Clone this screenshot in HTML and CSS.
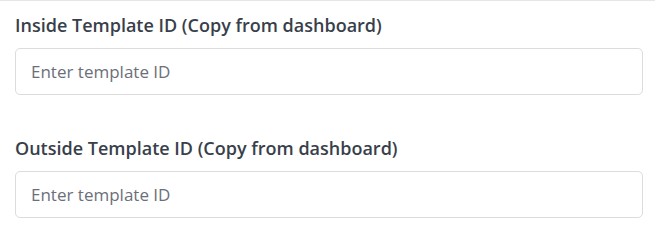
FILE: index.html
```html
<!DOCTYPE html>
<html>
<head>
    <meta charset="UTF-8">
    <meta name="viewport" content="width=device-width, initial-scale=1.0">
    <title>Template IDs</title>
    <link rel="stylesheet" href="styles.css">
</head>
<body>

    <div class="settings">
        <div class="field">
            <label class="field-label" for="insideId">Inside Template ID (Copy from dashboard)</label>
            <input class="field-input" id="insideId" type="text" placeholder="Enter template ID">
        </div>
        <div class="field">
            <label class="field-label" for="outsideId">Outside Template ID (Copy from dashboard)</label>
            <input class="field-input" id="outsideId" type="text" placeholder="Enter template ID">
        </div>
    </div>

</body>
</html>
```

FILE: styles.css
```css
body {
    margin: 0;
    font-family: "Open Sans", "Noto Sans", sans-serif;
    background-color: #ffffff;
}
.settings {
    border-top: 1px solid #e6e6e6;
    padding: 11px 12px 0 15px;
}
.field {
    display: flex;
    flex-direction: column;
}
.field + .field {
    margin-top: 40px;
}
.field-label {
    font-size: 18px;
    font-weight: 600;
    color: #383f4b;
    line-height: 26px;
    margin-bottom: 10px;
}
.field-input {
    height: 47px;
    box-sizing: border-box;
    padding: 0 15px;
    border: 1px solid #dcdcdc;
    border-radius: 5px;
    font-family: inherit;
    font-size: 17px;
    color: #333;
}
.field-input::placeholder {
    color: #6b6f7a;
}
```
